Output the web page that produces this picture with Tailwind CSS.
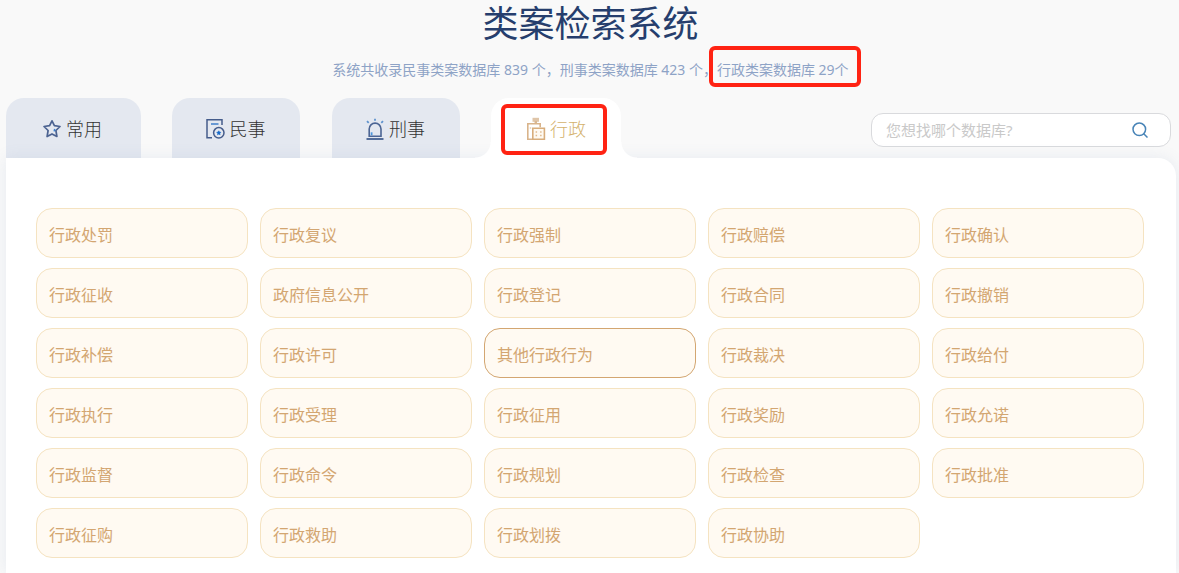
<!DOCTYPE html>
<html lang="zh-CN">
<head>
<meta charset="utf-8">
<meta name="viewport" content="width=device-width, initial-scale=1">
<title>类案检索系统</title>
<script src="https://cdn.jsdelivr.net/npm/@tailwindcss/browser@4"></script>
</head>
<body class="flex min-h-screen flex-col overflow-x-hidden bg-[#f9f9f9] font-['Noto_Sans','Noto_Sans_CJK_SC',sans-serif] text-[#333]">
<header class="flex flex-col items-center">
  <h1 class="h-12 pl-[2px] text-4xl leading-12 text-[#263e6d]">类案检索系统</h1>
  <p class="flex h-11 items-center whitespace-nowrap pl-[2px] text-sm text-[#8ea3c6]">
    <span>系统共收录民事类案数据库 839 个，刑事类案数据库 423 个，</span>
    <span class="relative">行政类案数据库 29个<span class="absolute -top-[14px] -right-3 -bottom-[7px] -left-2 rounded-md border-4 border-[#ff2313]"></span></span>
  </p>
</header>

<div class="flex items-start justify-between pr-2 pl-[6px] pt-[6px]">
  <nav class="flex h-[60px] gap-8 text-lg font-light">
    <button class="-mr-px flex w-[135px] items-center justify-center gap-1 rounded-t-[18px] bg-[#e4e8f0] pt-[2px] pr-[3px]">
      <svg class="h-5 w-5" viewBox="0 0 20 20" fill="none" stroke="#4c6391" stroke-width="1.7" stroke-linejoin="round"><path d="M10 1.8l2.4 4.9 5.6.8-4.1 4 1 6L10 14.9l-4.9 2.6 1-6L2 7.5l5.6-.8z"/><path d="M12.7 10l-.5 2.3" stroke="#3b82d0" stroke-width="1.5"/></svg>
      <span>常用</span>
    </button>
    <button class="flex w-32 items-center justify-center gap-1 rounded-t-[18px] bg-[#e4e8f0] pt-[2px] pr-[2px]">
      <svg class="h-[22px] w-[21px]" viewBox="0 0 21 22" fill="none"><path d="M17 7V1.7H2v18h5" stroke="#455c8b" stroke-width="1.5"/><path d="M6 6h7.5" stroke="#3f7fcb" stroke-width="1.5"/><circle cx="13.8" cy="14.8" r="5.2" stroke="#455c8b" stroke-width="1.5"/><path d="M13.8 12.8l.7 1.3 1.4.2-1 1 .2 1.5-1.3-.7-1.3.7.2-1.5-1-1 1.4-.2z" fill="#1769c9" stroke="#1769c9" stroke-width=".6"/></svg>
      <span>民事</span>
    </button>
    <button class="flex w-32 items-center justify-center gap-1 rounded-t-[18px] bg-[#e4e8f0] pt-[2px] pr-[2px]">
      <svg class="h-[22px] w-5" viewBox="0 0 20 22" fill="none"><path d="M4.2 18.3V11a5.9 5.9 0 0 1 11.8 0v7.3z" stroke="#4c6594" stroke-width="1.6"/><path d="M1.5 21h17" stroke="#304e84" stroke-width="1.6"/><path d="M10 .8v2M2 3.2l1.7 1.7M18 3.2l-1.7 1.7" stroke="#5f93ce" stroke-width="1.8"/><path d="M6.6 14.3v3" stroke="#4d96dc" stroke-width="1.8"/></svg>
      <span>刑事</span>
    </button>
    <button aria-current="page" class="relative z-10 -ml-px flex w-[130px] items-center justify-center gap-1 rounded-t-[18px] bg-white pt-[2px] text-[#d4b26c]">
      <span class="absolute right-full bottom-0 h-4 w-4 bg-[radial-gradient(circle_at_0_0,transparent_15px,white_16px)]"></span>
      <span class="absolute bottom-0 left-full h-4 w-4 bg-[radial-gradient(circle_at_100%_0,transparent_15px,white_16px)]"></span>
      <svg class="h-6 w-5" viewBox="0 0 20 24" fill="none"><path d="M6.5 .8h6.5v4H6.5z" fill="#dfc5a8"/><path d="M9.8 4v3" stroke="#d8b792" stroke-width="2.5"/><path d="M6.5 22.2H1.8V6.8h12.4v3.5" stroke="#d9b48b" stroke-width="1.6"/><path d="M4.5 10.5v1" stroke="#d9b48b" stroke-width="1.5"/><path d="M6.8 11.2h11.6v11H6.8z" fill="#fffaf2" stroke="#d8ad7c" stroke-width="1.6"/><path d="M9.6 15h1.5m3 0h1.5m-6 3.5h1.5m3 0h1.5" stroke="#dfb98d" stroke-width="1.5"/></svg>
      <span>行政</span>
      <span class="absolute top-[6px] right-[14px] bottom-[3px] left-[10px] rounded-md border-4 border-[#ff2313]"></span>
    </button>
  </nav>
  <form class="mt-[15px] flex h-[34px] w-[300px] items-center rounded-xl border border-[#d9dadd] bg-white pr-[22px] pl-[14px]" role="search">
    <input type="search" aria-label="搜索数据库" placeholder="您想找哪个数据库?" class="min-w-0 flex-1 bg-transparent text-[15px] outline-none placeholder:text-[#c9c9c9]">
    <button type="button" aria-label="搜索"><svg class="h-4 w-4" viewBox="0 0 16 16" fill="none" stroke="#4884b7" stroke-width="1.5"><circle cx="7.3" cy="7.3" r="6.3"/><path d="M11.5 11.5l4 4"/></svg></button>
  </form>
</div>

<main class="relative mr-[3px] ml-[6px] flex-1 rounded-tr-[18px] bg-white pt-[50px] pr-8 pb-[15px] pl-[30px] shadow-[0_0_16px_rgba(100,130,180,0.12)]">
  <div class="grid grid-cols-5 gap-x-3 gap-y-[10px] text-base text-[#d3a671] *:h-[50px] *:rounded-2xl *:border *:border-[#f5e3c1] *:bg-[#fffaf2] *:px-3 *:pt-1 *:text-left">
    <button>行政处罚</button>
    <button>行政复议</button>
    <button>行政强制</button>
    <button>行政赔偿</button>
    <button>行政确认</button>
    <button>行政征收</button>
    <button>政府信息公开</button>
    <button>行政登记</button>
    <button>行政合同</button>
    <button>行政撤销</button>
    <button>行政补偿</button>
    <button>行政许可</button>
    <button class="border-[#d3a671]!">其他行政行为</button>
    <button>行政裁决</button>
    <button>行政给付</button>
    <button>行政执行</button>
    <button>行政受理</button>
    <button>行政征用</button>
    <button>行政奖励</button>
    <button>行政允诺</button>
    <button>行政监督</button>
    <button>行政命令</button>
    <button>行政规划</button>
    <button>行政检查</button>
    <button>行政批准</button>
    <button>行政征购</button>
    <button>行政救助</button>
    <button>行政划拨</button>
    <button>行政协助</button>
  </div>
</main>
</body>
</html>
